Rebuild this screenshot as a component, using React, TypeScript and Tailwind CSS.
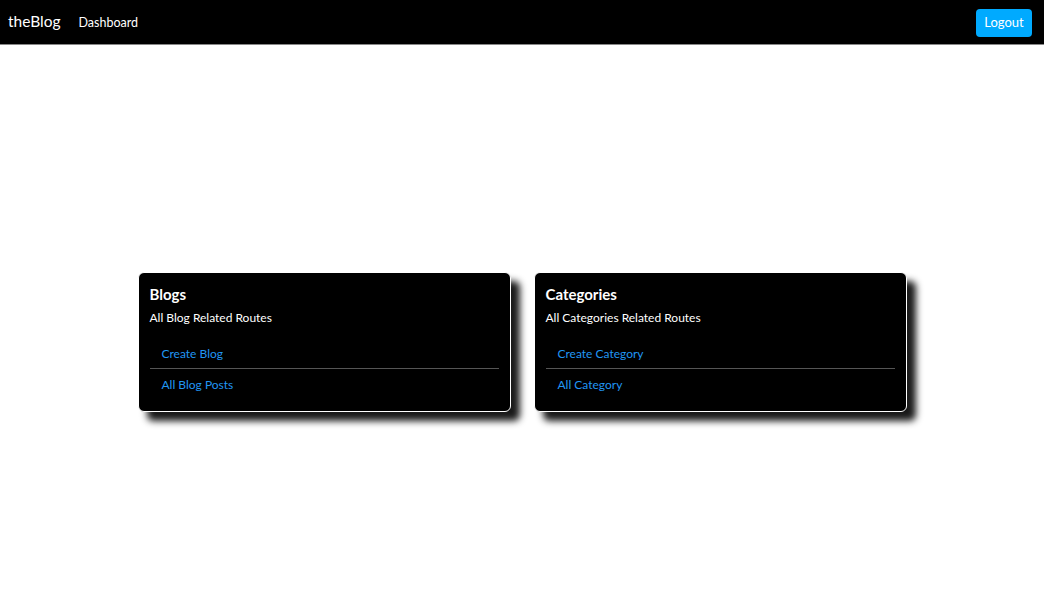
import React from 'react';

const cards = [
  {
    title: 'Blogs',
    subtitle: 'All Blog Related Routes',
    links: ['Create Blog', 'All Blog Posts'],
  },
  {
    title: 'Categories',
    subtitle: 'All Categories Related Routes',
    links: ['Create Category', 'All Category'],
  },
];

export default function App() {
  return (
    <div className="min-h-screen bg-white font-['Lato',sans-serif]">
      <nav className="flex h-[45px] items-center justify-between border-b border-[#888] bg-black pl-2 pr-3">
        <div className="flex items-center">
          <a href="#" className="text-[15.5px] text-white">theBlog</a>
          <a href="#" className="ml-[18px] mt-[2px] text-[12.5px] text-white">Dashboard</a>
        </div>
        <button className="mt-[2px] h-[28px] w-[56px] rounded-[4px] bg-[#00aaff] text-[13px] text-white">
          Logout
        </button>
      </nav>

      <main className="flex justify-center gap-[23px] pt-[227px]">
        {cards.map((card) => (
          <div
            key={card.title}
            className="w-[373px] rounded-[6px] border border-white bg-black px-[11px] pb-3 pt-[11px] text-white shadow-[9px_9px_7px_rgba(0,0,0,0.9)]"
          >
            <h3 className="text-[15px] font-bold leading-5">{card.title}</h3>
            <p className="mt-[4px] text-[12px] leading-5">{card.subtitle}</p>
            <ul className="mt-2">
              <li className="border-b border-[#555] px-3 pb-1 pt-2 text-[12px] leading-5">
                <a href="#" className="text-[#2196f3]">{card.links[0]}</a>
              </li>
              <li className="px-3 pb-1 pt-[6px] text-[12px] leading-5">
                <a href="#" className="text-[#2196f3]">{card.links[1]}</a>
              </li>
            </ul>
          </div>
        ))}
      </main>
    </div>
  );
}
